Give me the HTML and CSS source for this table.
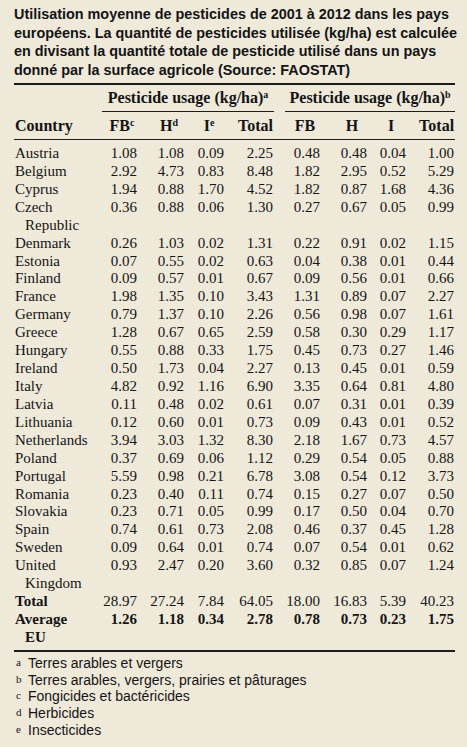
FILE: index.html
```html
<!DOCTYPE html>
<html lang="fr">

<head>
    <meta charset="UTF-8">
    <meta name="viewport" content="width=device-width, initial-scale=1.0">
    <title>Utilisation moyenne de pesticides</title>
    <link rel="stylesheet" href="styles.css">
</head>

<body>

    <div class="page">
        <p class="caption">Utilisation moyenne de pesticides de 2001 à 2012 dans les pays européens. La quantité de pesticides utilisée (kg/ha) est calculée en divisant la quantité totale de pesticide utilisé dans un pays donné par la surface agricole (Source: FAOSTAT)</p>

        <table class="usage">
            <colgroup>
                <col class="col-country">
                <col class="col-fb">
                <col class="col-h">
                <col class="col-i">
                <col class="col-total">
                <col class="col-fb2">
                <col class="col-h2">
                <col class="col-i2">
                <col class="col-total2">
            </colgroup>
            <thead>
                <tr class="group-row">
                    <th></th>
                    <th colspan="4"><div class="group">Pesticide usage (kg/ha)<sup>a</sup></div></th>
                    <th colspan="4"><div class="group second">Pesticide usage (kg/ha)<sup>b</sup></div></th>
                </tr>
                <tr class="head-row">
                    <th class="country">Country</th>
                    <th><span>FB<sup>c</sup></span></th>
                    <th><span>H<sup>d</sup></span></th>
                    <th><span>I<sup>e</sup></span></th>
                    <th>Total</th>
                    <th><span>FB</span></th>
                    <th><span>H</span></th>
                    <th><span>I</span></th>
                    <th>Total</th>
                </tr>
            </thead>
            <tbody>
                <tr><td class="country">Austria</td><td>1.08</td><td>1.08</td><td>0.09</td><td>2.25</td><td>0.48</td><td>0.48</td><td>0.04</td><td>1.00</td></tr>
                <tr><td class="country">Belgium</td><td>2.92</td><td>4.73</td><td>0.83</td><td>8.48</td><td>1.82</td><td>2.95</td><td>0.52</td><td>5.29</td></tr>
                <tr><td class="country">Cyprus</td><td>1.94</td><td>0.88</td><td>1.70</td><td>4.52</td><td>1.82</td><td>0.87</td><td>1.68</td><td>4.36</td></tr>
                <tr><td class="country">Czech Republic</td><td>0.36</td><td>0.88</td><td>0.06</td><td>1.30</td><td>0.27</td><td>0.67</td><td>0.05</td><td>0.99</td></tr>
                <tr><td class="country">Denmark</td><td>0.26</td><td>1.03</td><td>0.02</td><td>1.31</td><td>0.22</td><td>0.91</td><td>0.02</td><td>1.15</td></tr>
                <tr><td class="country">Estonia</td><td>0.07</td><td>0.55</td><td>0.02</td><td>0.63</td><td>0.04</td><td>0.38</td><td>0.01</td><td>0.44</td></tr>
                <tr><td class="country">Finland</td><td>0.09</td><td>0.57</td><td>0.01</td><td>0.67</td><td>0.09</td><td>0.56</td><td>0.01</td><td>0.66</td></tr>
                <tr><td class="country">France</td><td>1.98</td><td>1.35</td><td>0.10</td><td>3.43</td><td>1.31</td><td>0.89</td><td>0.07</td><td>2.27</td></tr>
                <tr><td class="country">Germany</td><td>0.79</td><td>1.37</td><td>0.10</td><td>2.26</td><td>0.56</td><td>0.98</td><td>0.07</td><td>1.61</td></tr>
                <tr><td class="country">Greece</td><td>1.28</td><td>0.67</td><td>0.65</td><td>2.59</td><td>0.58</td><td>0.30</td><td>0.29</td><td>1.17</td></tr>
                <tr><td class="country">Hungary</td><td>0.55</td><td>0.88</td><td>0.33</td><td>1.75</td><td>0.45</td><td>0.73</td><td>0.27</td><td>1.46</td></tr>
                <tr><td class="country">Ireland</td><td>0.50</td><td>1.73</td><td>0.04</td><td>2.27</td><td>0.13</td><td>0.45</td><td>0.01</td><td>0.59</td></tr>
                <tr><td class="country">Italy</td><td>4.82</td><td>0.92</td><td>1.16</td><td>6.90</td><td>3.35</td><td>0.64</td><td>0.81</td><td>4.80</td></tr>
                <tr><td class="country">Latvia</td><td>0.11</td><td>0.48</td><td>0.02</td><td>0.61</td><td>0.07</td><td>0.31</td><td>0.01</td><td>0.39</td></tr>
                <tr><td class="country">Lithuania</td><td>0.12</td><td>0.60</td><td>0.01</td><td>0.73</td><td>0.09</td><td>0.43</td><td>0.01</td><td>0.52</td></tr>
                <tr><td class="country">Netherlands</td><td>3.94</td><td>3.03</td><td>1.32</td><td>8.30</td><td>2.18</td><td>1.67</td><td>0.73</td><td>4.57</td></tr>
                <tr><td class="country">Poland</td><td>0.37</td><td>0.69</td><td>0.06</td><td>1.12</td><td>0.29</td><td>0.54</td><td>0.05</td><td>0.88</td></tr>
                <tr><td class="country">Portugal</td><td>5.59</td><td>0.98</td><td>0.21</td><td>6.78</td><td>3.08</td><td>0.54</td><td>0.12</td><td>3.73</td></tr>
                <tr><td class="country">Romania</td><td>0.23</td><td>0.40</td><td>0.11</td><td>0.74</td><td>0.15</td><td>0.27</td><td>0.07</td><td>0.50</td></tr>
                <tr><td class="country">Slovakia</td><td>0.23</td><td>0.71</td><td>0.05</td><td>0.99</td><td>0.17</td><td>0.50</td><td>0.04</td><td>0.70</td></tr>
                <tr><td class="country">Spain</td><td>0.74</td><td>0.61</td><td>0.73</td><td>2.08</td><td>0.46</td><td>0.37</td><td>0.45</td><td>1.28</td></tr>
                <tr><td class="country">Sweden</td><td>0.09</td><td>0.64</td><td>0.01</td><td>0.74</td><td>0.07</td><td>0.54</td><td>0.01</td><td>0.62</td></tr>
                <tr><td class="country">United Kingdom</td><td>0.93</td><td>2.47</td><td>0.20</td><td>3.60</td><td>0.32</td><td>0.85</td><td>0.07</td><td>1.24</td></tr>
                <tr class="sum"><td class="country">Total</td><td>28.97</td><td>27.24</td><td>7.84</td><td>64.05</td><td>18.00</td><td>16.83</td><td>5.39</td><td>40.23</td></tr>
                <tr class="average"><td class="country">Average EU</td><td>1.26</td><td>1.18</td><td>0.34</td><td>2.78</td><td>0.78</td><td>0.73</td><td>0.23</td><td>1.75</td></tr>
            </tbody>
        </table>

        <!-- Notes sous le tableau -->
        <ul class="notes">
            <li><span class="mark">a</span>Terres arables et vergers</li>
            <li><span class="mark">b</span>Terres arables, vergers, prairies et pâturages</li>
            <li><span class="mark">c</span>Fongicides et bactéricides</li>
            <li><span class="mark">d</span>Herbicides</li>
            <li><span class="mark">e</span>Insecticides</li>
        </ul>
    </div>

</body>

</html>
```

FILE: styles.css
```css
body, html {
    margin: 0;
    padding: 0;
    background: #efe9da;
    color: #141414;
}

.page {
    padding: 5px 8px 0 14px;
}

.caption {
    margin: 0;
    font-family: "Liberation Sans", Arial, sans-serif;
    font-weight: bold;
    font-size: 14.4px;
    line-height: 18.5px;
}

/* Tableau */
.usage {
    margin-top: 4px;
    width: 441px;
    table-layout: fixed;
    border-collapse: separate;
    border-spacing: 0;
    border-top: 2px solid #1c1c1c;
    border-bottom: 2px solid #1c1c1c;
    font-family: "Liberation Serif", "Times New Roman", serif;
    font-size: 15px;
    line-height: 17.92px;
}

.col-country { width: 88px; }
.col-fb { width: 36px; }
.col-h { width: 47px; }
.col-i { width: 40px; }
.col-total { width: 49px; }
.col-fb2 { width: 47px; }
.col-h2 { width: 47px; }
.col-i2 { width: 39px; }
.col-total2 { width: 48px; }

.usage th, .usage td {
    padding: 0 1px 0 0;
    text-align: right;
    vertical-align: top;
    white-space: nowrap;
}

.usage thead th {
    font-size: 16px;
    line-height: 18px;
}

.usage sup {
    font-size: 10px;
    line-height: 0;
    vertical-align: 5px;
}

.group-row th {
    padding: 4px 0 0 0;
}

.group {
    text-align: center;
    padding-bottom: 4px;
    border-bottom: 1px solid #1c1c1c;
}

.group.second {
    margin-left: 11px;
}

.head-row th {
    padding-top: 5px;
    padding-bottom: 4px;
    border-bottom: 1px solid #1c1c1c;
}

.head-row th span {
    display: inline-block;
    width: 30px;
    text-align: center;
}

.usage .country {
    text-align: left;
    white-space: normal;
    padding-left: 11px;
    padding-right: 12px;
    text-indent: -10px;
}

.usage tbody tr:first-child td {
    padding-top: 5px;
}

.usage tbody tr:last-child td {
    padding-bottom: 3px;
}

.sum .country,
.average td {
    font-weight: bold;
}

/* Notes */
.notes {
    list-style: none;
    margin: 3px 0 0 0;
    padding: 0;
    font-family: "Liberation Sans", Arial, sans-serif;
    font-size: 14px;
    line-height: 16.8px;
}

.notes li {
    display: flex;
    align-items: baseline;
}

.mark {
    width: 12px;
    padding-left: 2px;
    font-family: "Liberation Serif", "Times New Roman", serif;
    font-size: 11px;
    line-height: 11px;
    position: relative;
    top: -2px;
}
```
